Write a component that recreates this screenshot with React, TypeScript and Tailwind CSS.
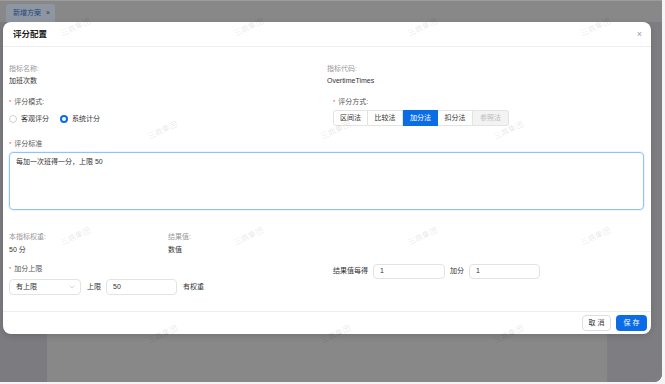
import React from "react";

const font = { fontFamily: '"Liberation Sans","Noto Sans CJK SC",sans-serif' };

function Req({ children }: { children: React.ReactNode }) {
  return (
    <div className="h-[12px] flex items-center text-[7px] text-[#555]">
      <span className="text-[#ff4d4f] mr-[3px] text-[6px]">*</span>
      {children}
    </div>
  );
}

function Label({ children }: { children: React.ReactNode }) {
  return <div className="h-[12px] flex items-center text-[7px] text-[#999]">{children}</div>;
}

function Value({ children }: { children: React.ReactNode }) {
  return <div className="h-[12px] flex items-center text-[7px] text-[#333]">{children}</div>;
}

const marks: [number, number][] = [
  [60, 28], [233, 28], [407, 28], [580, 28],
  [147, 131], [320, 131], [493, 131],
  [60, 237], [233, 237], [407, 237], [580, 237],
  [147, 335], [320, 335], [493, 335],
];

export default function App() {
  return (
    <div className="relative w-[665px] h-[384px] bg-[#f4f4f4] overflow-hidden" style={font}>
      <div className="w-[662px] h-[382px] bg-[#888888] rounded-br-[8px] overflow-hidden flex flex-col">
        <div className="h-[1px] bg-[#9c9c9c]" />
        <div className="h-[21px] flex items-end pl-[6px]">
          <div className="h-[18px] w-[49px] rounded-t-[3px] bg-[#8e96a2] flex items-center pl-[7px] gap-[5px] text-[7px] text-[#23467c]">
            <span>新增方案</span>
            <span className="text-[#333] text-[7px]">×</span>
          </div>
        </div>
        <div className="flex-1 flex">
          <div className="w-[47px] bg-[#7c7c80]" />
          <div className="flex-1 bg-[#888888]" />
          <div className="w-[55px] bg-[#7e7e82]" />
        </div>
      </div>

      <div className="absolute left-[3px] top-[22px] w-[648px] h-[312px] bg-white rounded-[8px] flex flex-col shadow-[0_2px_6px_rgba(0,0,0,0.15)]">
        <div className="h-[25px] flex items-center justify-between pl-[10px] pr-[9px] border-b border-[#ededed]">
          <span className="text-[8.5px] font-bold text-[#1f1f1f]">评分配置</span>
          <span className="text-[9px] text-[#999] leading-none">×</span>
        </div>
        <div className="flex-1 pl-[6px] pr-[7px] pt-[16px]">
          <div className="grid grid-cols-[318px_1fr]">
            <div>
              <Label>指标名称:</Label>
              <Value>加班次数</Value>
            </div>
            <div>
              <Label>指标代码:</Label>
              <Value>OvertimeTimes</Value>
            </div>
          </div>
          <div className="grid grid-cols-[324px_1fr] mt-[9px]">
            <div>
              <Req>评分模式:</Req>
              <div className="mt-[3px] h-[16px] flex items-center text-[7px] text-[#333]">
                <span className="w-[8px] h-[8px] rounded-full border border-[#d0d0d0] bg-white" />
                <span className="ml-[4px]">客观评分</span>
                <span className="ml-[11px] w-[8px] h-[8px] rounded-full border-[2.5px] border-[#0b6de6] bg-white" />
                <span className="ml-[4px]">系统计分</span>
              </div>
            </div>
            <div>
              <Req>评分方式:</Req>
              <div className="mt-[2px] h-[16px] flex text-[7px]">
                <div className="w-[35px] flex items-center justify-center border border-[#e3e3e3] rounded-l-[3px] text-[#333]">区间法</div>
                <div className="w-[35px] flex items-center justify-center border-y border-r border-[#e3e3e3] text-[#333]">比较法</div>
                <div className="w-[35px] flex items-center justify-center bg-[#0b6de6] text-white">加分法</div>
                <div className="w-[35px] flex items-center justify-center border-y border-r border-[#e3e3e3] text-[#333]">扣分法</div>
                <div className="w-[36px] flex items-center justify-center border-y border-r border-[#e3e3e3] bg-[#f3f3f3] rounded-r-[3px] text-[#bbb]">参照法</div>
              </div>
            </div>
          </div>
          <div className="mt-[11px]">
            <Req>评分标准</Req>
            <div className="mt-[2px] h-[58px] w-[635px] rounded-[4px] border border-[#8fc1ff] shadow-[0_0_0_1px_rgba(22,119,255,0.08)] px-[6px] pt-[3px] text-[7px] text-[#333] leading-[12px]">
              每加一次班得一分，上限 50
            </div>
          </div>
          <div className="mt-[21px] grid grid-cols-[159px_1fr]">
            <div>
              <Label>本指标权重:</Label>
              <div className="mt-[1px]"><Value>50 分</Value></div>
            </div>
            <div>
              <Label>结果值:</Label>
              <div className="mt-[1px]"><Value>数值</Value></div>
            </div>
          </div>
          <div className="mt-[7px] grid grid-cols-[324px_1fr]">
            <div>
              <Req>加分上限</Req>
              <div className="mt-[4px] h-[16px] flex items-center text-[7px] text-[#333]">
                <div className="w-[72px] h-[16px] rounded-[4px] border border-[#e3e3e3] flex items-center justify-between pl-[6px] pr-[5px]">
                  <span>有上限</span>
                  <svg width="6" height="4" viewBox="0 0 6 4"><path d="M0.5 0.5 L3 3 L5.5 0.5" fill="none" stroke="#c4c4c4" strokeWidth="0.7" /></svg>
                </div>
                <span className="ml-[6px]">上限</span>
                <div className="ml-[5px] w-[71px] h-[16px] rounded-[4px] border border-[#e3e3e3] flex items-center pl-[6px]">50</div>
                <span className="ml-[6px]">有权重</span>
              </div>
            </div>
            <div className="pt-[1px]">
              <div className="h-[15px] flex items-center text-[7px] text-[#333]">
                <span>结果值每得</span>
                <div className="ml-[5px] w-[72px] h-[15px] rounded-[4px] border border-[#e3e3e3] flex items-center pl-[6px]">1</div>
                <span className="ml-[5px]">加分</span>
                <div className="ml-[5px] w-[71px] h-[15px] rounded-[4px] border border-[#e3e3e3] flex items-center pl-[6px]">1</div>
              </div>
            </div>
          </div>
        </div>
        <div className="h-[23px] border-t border-[#ededed] flex items-center justify-end pr-[4px] gap-[5px]">
          <div className="w-[29px] h-[16px] rounded-[4px] border border-[#dedede] flex items-center justify-center text-[7px] text-[#333] tracking-[2px] pl-[2px]">取消</div>
          <div className="w-[31px] h-[16px] rounded-[4px] bg-[#0b6de6] flex items-center justify-center text-[7px] text-white tracking-[2px] pl-[2px]">保存</div>
        </div>
      </div>

      {marks.map(([x, y], i) => (
        <div
          key={i}
          className="absolute pointer-events-none text-[8px] text-[rgba(0,0,0,0.1)] whitespace-nowrap -rotate-[25deg]"
          style={{ left: x, top: y - 6 }}
        >
          三鼎集团
        </div>
      ))}
    </div>
  );
}
